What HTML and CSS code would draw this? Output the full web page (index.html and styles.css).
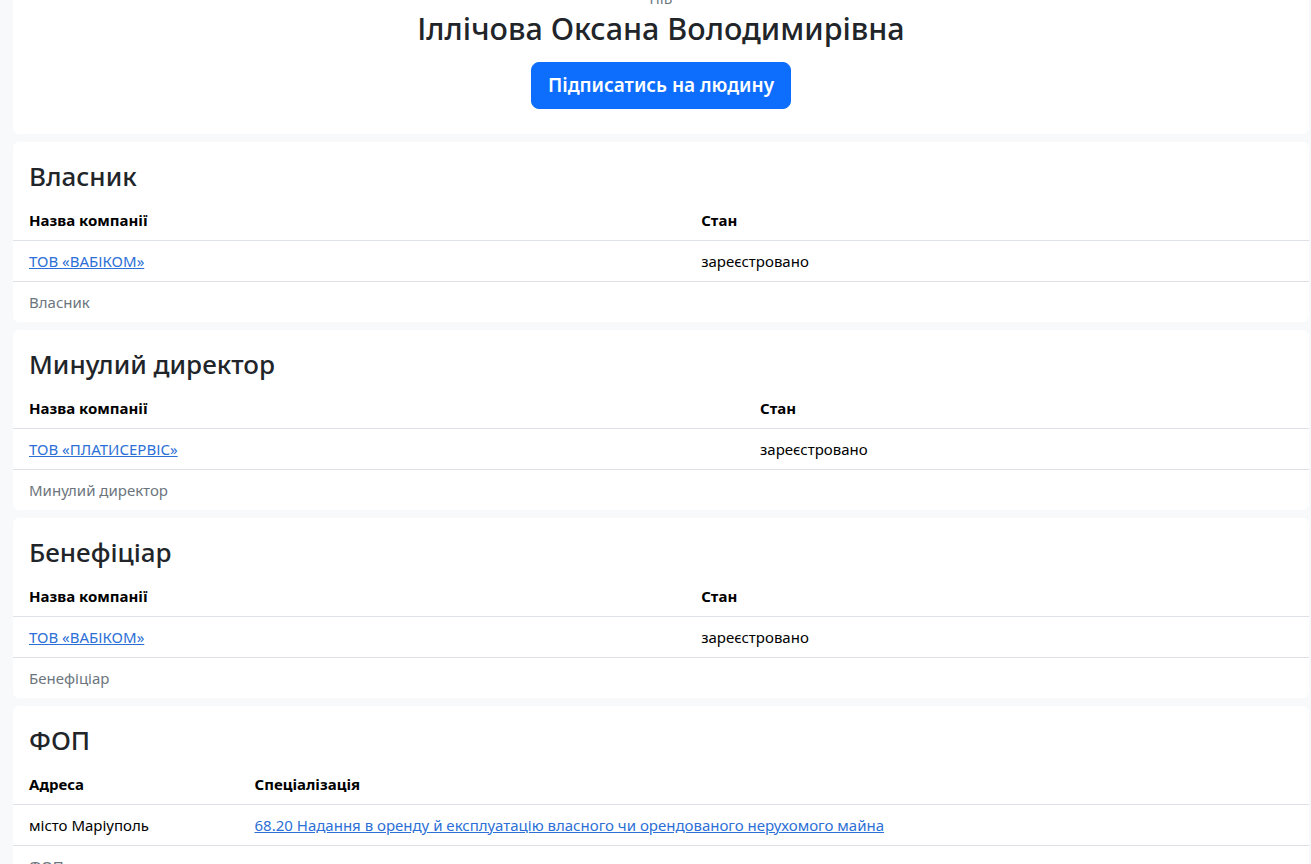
FILE: index.html
```html
<!DOCTYPE html>
<html lang="uk">

<head>
  <meta charset="utf-8">
  <meta name="viewport" content="width=device-width">
  <title>Іллічова Оксана Володимирівна</title>
  <link rel="stylesheet" href="styles.css">
</head>

<body>
  <div class="page">
    <div class="card person">
      <div class="label">ПІБ</div>
      <h2 class="name">Іллічова Оксана Володимирівна</h2>
      <button class="btn">Підписатись на людину</button>
    </div>

    <div class="card">
      <h3 class="card-title">Власник</h3>
      <table class="table">
        <caption>Власник</caption>
        <thead>
          <tr><th>Назва компанії</th><th>Стан</th></tr>
        </thead>
        <tbody>
          <tr><td><a href="#">ТОВ «ВАБІКОМ»</a></td><td>зареєстровано</td></tr>
        </tbody>
      </table>
    </div>

    <div class="card">
      <h3 class="card-title">Минулий директор</h3>
      <table class="table">
        <caption>Минулий директор</caption>
        <thead>
          <tr><th>Назва компанії</th><th>Стан</th></tr>
        </thead>
        <tbody>
          <tr><td><a href="#">ТОВ «ПЛАТИСЕРВІС»</a></td><td>зареєстровано</td></tr>
        </tbody>
      </table>
    </div>

    <div class="card">
      <h3 class="card-title">Бенефіціар</h3>
      <table class="table">
        <caption>Бенефіціар</caption>
        <thead>
          <tr><th>Назва компанії</th><th>Стан</th></tr>
        </thead>
        <tbody>
          <tr><td><a href="#">ТОВ «ВАБІКОМ»</a></td><td>зареєстровано</td></tr>
        </tbody>
      </table>
    </div>

    <div class="card">
      <h3 class="card-title">ФОП</h3>
      <table class="table">
        <caption>ФОП</caption>
        <thead>
          <tr><th class="col-address">Адреса</th><th class="col-spec">Спеціалізація</th></tr>
        </thead>
        <tbody>
          <tr><td>місто Маріуполь</td><td><a href="#">68.20 Надання в оренду й експлуатацію власного чи орендованого нерухомого майна</a></td></tr>
        </tbody>
      </table>
    </div>
  </div>
</body>

</html>
```

FILE: styles.css
```css
body {
  font-family: "Noto Sans", "Open Sans", sans-serif;
  font-size: 16px;
  line-height: 1.5;
  color: #212529;
  background-color: #f8f9fa;
  margin: 0;
  padding: 0;
}

.page {
  margin-top: -28px;
  padding: 0 2px 0 13px;
}

.card {
  background-color: #fff;
  border-radius: 6px;
  margin-bottom: 8px;
  overflow: hidden;
}

.person {
  text-align: center;
  padding: 16px 16px 24.5px;
}

.label {
  font-size: 14px;
  color: #6c757d;
}

.name {
  font-size: 30.5px;
  font-weight: 500;
  line-height: 38px;
  margin: 0 0 15px;
}

.btn {
  font-family: inherit;
  font-size: 19px;
  font-weight: 600;
  line-height: 29px;
  color: #fff;
  background-color: #0d6efd;
  border: 1px solid #0d6efd;
  border-radius: 8px;
  padding: 8px 16px;
  cursor: pointer;
}

.card-title {
  font-size: 26px;
  font-weight: 500;
  line-height: 37.5px;
  margin: 16px 16px 4.5px;
}

.table {
  width: 100%;
  border-collapse: collapse;
  caption-side: bottom;
}

.table th,
.table td {
  text-align: left;
  font-size: 15px;
  line-height: 24px;
  color: #000;
  padding: 8px 16px;
  border-bottom: 1px solid #dee2e6;
}

.table th {
  font-weight: 700;
}

.table .col-address {
  width: 17.4%;
}

.table .col-spec {
  width: 82.6%;
}

.table caption {
  text-align: left;
  font-size: 15px;
  line-height: 24px;
  padding: 8px 16px;
  color: #6c757d;
}

.table a {
  color: #2c6fd6;
}
```
